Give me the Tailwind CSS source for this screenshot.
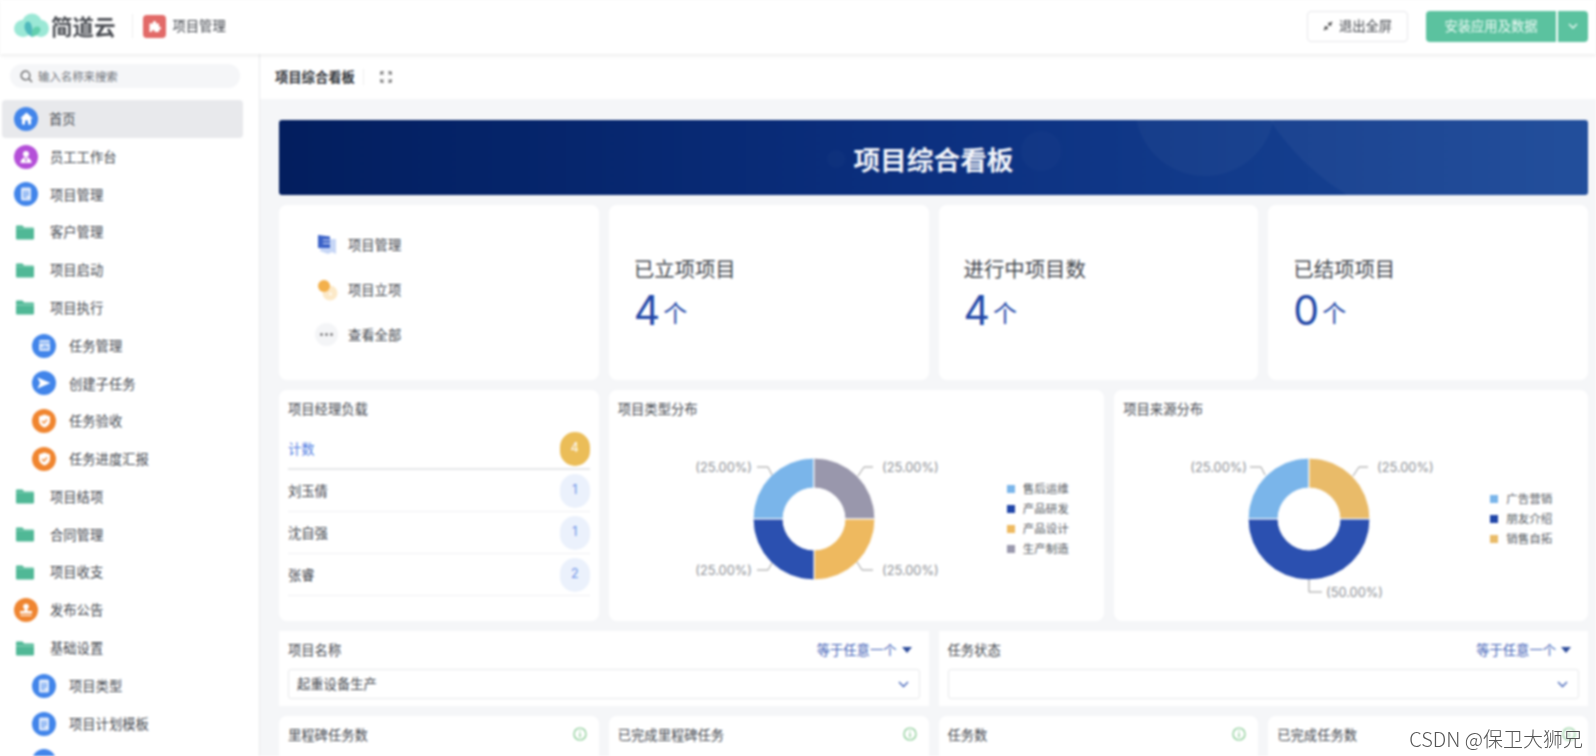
<!DOCTYPE html>
<html lang="zh">
<head>
<meta charset="utf-8">
<title>项目综合看板</title>
<script src="https://cdn.jsdelivr.net/npm/@tailwindcss/browser@4"></script>
</head>
<body class="m-0 bg-white">
<div class="relative w-[1596px] h-[756px] overflow-hidden bg-white">
<div class="flex flex-col w-full h-full blur-[0.8px] font-['Noto_Sans_CJK_SC',sans-serif] text-[13.3px] text-[#44484f]">

  <!-- top bar -->
  <header class="relative z-10 flex items-center h-[54px] shrink-0 bg-white shadow-[0_1px_4px_rgba(0,0,0,0.1)] pl-[14px] pr-[8px] pb-[2px]">
    <svg class="w-[35px] h-[26px]" viewBox="0 0 35 26"><ellipse cx="9" cy="15.500" rx="9" ry="8.500" fill="#9be8d6"/><circle cx="18" cy="10.500" r="10" fill="#9be8d6"/><ellipse cx="27" cy="15.500" rx="8" ry="8.500" fill="#9be8d6"/><path d="M18 24C13 21 9 16 11 11c1.500-3.500 5-3 6 0 1.500 4 2 8 1 13z" fill="#4fb9bd"/><path d="M18 24c-1-4 0-8 3-10 2.500-1.500 6 0 5.500 3C26 20 22 23 18 24z" fill="#63cfae"/></svg>
    <span class="ml-[2px] text-[21.500px] font-bold text-[#4a4d53]">简道云</span>
    <span class="ml-[16px] w-px h-[24px] bg-[#eeeeee]"></span>
    <span class="ml-[10px] flex items-center justify-center w-[23px] h-[23px] rounded-[4px] bg-[#e26a68]">
      <svg class="w-[13px] h-[13px]" viewBox="0 0 13 13"><path d="M1.500 3.500H5C4.500 2.500 5 1 6.500 1S8.500 2.500 8 3.500h3V7c1-.5 2 0 2 1.300S12 10 11 9.500V12H6.500c.5-1-.2-2-1.300-2S3.500 11 4 12H1.500z" fill="#fff"/></svg>
    </span>
    <span class="ml-[7px]">项目管理</span>
    <div class="ml-auto flex items-center justify-center gap-[6px] w-[101px] h-[31px] rounded-[4px] border border-[#e6e7ea] text-[#44474d]">
      <svg class="w-[10px] h-[10px]" viewBox="0 0 10 10"><path d="M1 9l3-3M9 1L6 4" stroke="#444" stroke-width="1.500"/><path d="M1 5.500h3.500V9zM9 4.500H5.500V1z" fill="#333"/></svg>
      退出全屏
    </div>
    <div class="ml-[18px] flex items-center justify-center w-[130px] h-[31px] rounded-l-[4px] bg-[#5bc29f] text-[#f0faf6]">安装应用及数据</div>
    <div class="ml-[2px] flex items-center justify-center w-[30px] h-[31px] rounded-r-[4px] bg-[#5bc29f]">
      <svg class="w-[10px] h-[6px]" viewBox="0 0 10 6" fill="none"><path d="M1 1l4 4 4-4" stroke="#f0faf6" stroke-width="1.300"/></svg>
    </div>
  </header>

  <div class="flex flex-1 min-h-0">
    <!-- sidebar -->
    <aside class="w-[260px] shrink-0 border-r border-[#e8e9eb] bg-white overflow-hidden">
      <div class="mt-[10px] ml-[10px] w-[230px] h-[24px] rounded-full bg-[#f5f6f8] flex items-center pl-[10px] pt-[1px] gap-[5px] text-[11.400px] text-[#6e7279]">
        <svg class="w-[13px] h-[13px]" viewBox="0 0 13 13" fill="none"><circle cx="5.500" cy="5.500" r="4.300" stroke="#555" stroke-width="1.200"/><path d="M8.700 8.700L12 12" stroke="#555" stroke-width="1.200"/></svg>
        输入名称来搜索
      </div>
      <nav class="mt-[12px]">
        <div class="flex items-center ml-[2px] w-[241px] h-[37.800px] rounded-[4px] bg-[#e8e9ec] pl-[12px] gap-[11px]">
          <span class="flex items-center justify-center w-[24px] h-[24px] rounded-full bg-[#4285ea] shrink-0"><svg class="w-[15px] h-[15px]" viewBox="0 0 15 15"><path d="M7.500 1.500L14 7.500h-2v6H9V9.500H6v4H3v-6H1z" fill="#fff"/></svg></span>首页
        </div>
        <div class="flex items-center ml-[2px] h-[37.800px] pl-[12px] gap-[12px]">
          <span class="flex items-center justify-center w-[24px] h-[24px] rounded-full bg-[#b44fd8] shrink-0"><svg class="w-[14px] h-[14px]" viewBox="0 0 14 14"><circle cx="7" cy="4" r="3" fill="#fff"/><path d="M1.500 13c0-3.500 2.500-5.500 5.500-5.500s5.500 2 5.500 5.500z" fill="#fff"/><path d="M7 8l-1 2 1 2 1-2z" fill="#b44fd8"/></svg></span>员工工作台
        </div>
        <div class="flex items-center ml-[2px] h-[37.800px] pl-[12px] gap-[12px]">
          <span class="flex items-center justify-center w-[24px] h-[24px] rounded-full bg-[#4285ea] shrink-0"><svg class="w-[12px] h-[14px]" viewBox="0 0 12 14"><rect x="1" y="0.500" width="10" height="13" rx="1.500" fill="#dce8fb"/><path d="M3 5h6M3 7.500h6M3 10h4" stroke="#4285ea"/></svg></span>项目管理
        </div>
        <div class="flex items-center ml-[2px] h-[37.800px] pl-[14px] gap-[16px]">
          <svg class="w-[18px] h-[15px] shrink-0" viewBox="0 0 18 15"><path d="M0 1.500A1 1 0 0 1 1 .5h5.500l1.500 2h9a1 1 0 0 1 1 1v10a1 1 0 0 1-1 1H1a1 1 0 0 1-1-1z" fill="#50b896"/><path d="M0 3.500h18" stroke="#8dd3bb" stroke-width=".7"/></svg>客户管理
        </div>
        <div class="flex items-center ml-[2px] h-[37.800px] pl-[14px] gap-[16px]">
          <svg class="w-[18px] h-[15px] shrink-0" viewBox="0 0 18 15"><path d="M0 1.500A1 1 0 0 1 1 .5h5.500l1.500 2h9a1 1 0 0 1 1 1v10a1 1 0 0 1-1 1H1a1 1 0 0 1-1-1z" fill="#50b896"/><path d="M0 3.500h18" stroke="#8dd3bb" stroke-width=".7"/></svg>项目启动
        </div>
        <div class="flex items-center ml-[2px] h-[37.800px] pl-[14px] gap-[16px]">
          <svg class="w-[18px] h-[15px] shrink-0" viewBox="0 0 18 15"><path d="M0 1.500A1 1 0 0 1 1 .5h5.500l1.500 2h9a1 1 0 0 1 1 1v10a1 1 0 0 1-1 1H1a1 1 0 0 1-1-1z" fill="#50b896"/><path d="M0 5h18" stroke="#a5e0cb" stroke-width=".8"/></svg>项目执行
        </div>
        <div class="flex items-center ml-[2px] h-[37.800px] pl-[30px] gap-[13px]">
          <span class="flex items-center justify-center w-[24px] h-[24px] rounded-full bg-[#4285ea] shrink-0"><svg class="w-[13px] h-[13px]" viewBox="0 0 13 13"><rect x="1" y="1" width="11" height="11" rx="1.500" fill="#dce8fb"/><path d="M1 3.800h11" stroke="#4285ea"/><path d="M4 10V8M6.500 10V6M9 10V7" stroke="#4285ea" stroke-width="1.200"/></svg></span>任务管理
        </div>
        <div class="flex items-center ml-[2px] h-[37.800px] pl-[30px] gap-[13px]">
          <span class="flex items-center justify-center w-[24px] h-[24px] rounded-full bg-[#4285ea] shrink-0"><svg class="w-[14px] h-[12px]" viewBox="0 0 14 12"><path d="M0.500 0.500L13.500 6 0.500 11.500 3 6z" fill="#fff"/></svg></span>创建子任务
        </div>
        <div class="flex items-center ml-[2px] h-[37.800px] pl-[30px] gap-[13px]">
          <span class="flex items-center justify-center w-[24px] h-[24px] rounded-full bg-[#f0852f] shrink-0"><svg class="w-[13px] h-[14px]" viewBox="0 0 13 14"><path d="M6.500.5l5.500 2v4.500c0 3-2.500 5.500-5.500 6.500C3.500 12.500 1 10 1 7V2.500z" fill="#fff"/><path d="M4 7l2 2 3-3.500" stroke="#f0852f" stroke-width="1.300" fill="none"/></svg></span>任务验收
        </div>
        <div class="flex items-center ml-[2px] h-[37.800px] pl-[30px] gap-[13px]">
          <span class="flex items-center justify-center w-[24px] h-[24px] rounded-full bg-[#f0852f] shrink-0"><svg class="w-[13px] h-[14px]" viewBox="0 0 13 14"><path d="M6.500.5l5.500 2v4.500c0 3-2.500 5.500-5.500 6.500C3.500 12.500 1 10 1 7V2.500z" fill="#fff"/><path d="M4 7l2 2 3-3.500" stroke="#f0852f" stroke-width="1.300" fill="none"/></svg></span>任务进度汇报
        </div>
        <div class="flex items-center ml-[2px] h-[37.800px] pl-[14px] gap-[16px]">
          <svg class="w-[18px] h-[15px] shrink-0" viewBox="0 0 18 15"><path d="M0 1.500A1 1 0 0 1 1 .5h5.500l1.500 2h9a1 1 0 0 1 1 1v10a1 1 0 0 1-1 1H1a1 1 0 0 1-1-1z" fill="#50b896"/><path d="M0 3.500h18" stroke="#8dd3bb" stroke-width=".7"/></svg>项目结项
        </div>
        <div class="flex items-center ml-[2px] h-[37.800px] pl-[14px] gap-[16px]">
          <svg class="w-[18px] h-[15px] shrink-0" viewBox="0 0 18 15"><path d="M0 1.500A1 1 0 0 1 1 .5h5.500l1.500 2h9a1 1 0 0 1 1 1v10a1 1 0 0 1-1 1H1a1 1 0 0 1-1-1z" fill="#50b896"/><path d="M0 3.500h18" stroke="#8dd3bb" stroke-width=".7"/></svg>合同管理
        </div>
        <div class="flex items-center ml-[2px] h-[37.800px] pl-[14px] gap-[16px]">
          <svg class="w-[18px] h-[15px] shrink-0" viewBox="0 0 18 15"><path d="M0 1.500A1 1 0 0 1 1 .5h5.500l1.500 2h9a1 1 0 0 1 1 1v10a1 1 0 0 1-1 1H1a1 1 0 0 1-1-1z" fill="#50b896"/><path d="M0 3.500h18" stroke="#8dd3bb" stroke-width=".7"/></svg>项目收支
        </div>
        <div class="flex items-center ml-[2px] h-[37.800px] pl-[12px] gap-[12px]">
          <span class="flex items-center justify-center w-[24px] h-[24px] rounded-full bg-[#ef8530] shrink-0"><svg class="w-[14px] h-[14px]" viewBox="0 0 14 14"><circle cx="7" cy="3.500" r="2.800" fill="#fff"/><path d="M5.500 5.500h3V8H13v2.500H1V8h4.500z" fill="#fff"/><path d="M1.500 12h11v1h-11z" fill="#fff"/></svg></span>发布公告
        </div>
        <div class="flex items-center ml-[2px] h-[37.800px] pl-[14px] gap-[16px]">
          <svg class="w-[18px] h-[15px] shrink-0" viewBox="0 0 18 15"><path d="M0 1.500A1 1 0 0 1 1 .5h5.500l1.500 2h9a1 1 0 0 1 1 1v10a1 1 0 0 1-1 1H1a1 1 0 0 1-1-1z" fill="#50b896"/><path d="M0 5h18" stroke="#a5e0cb" stroke-width=".8"/></svg>基础设置
        </div>
        <div class="flex items-center ml-[2px] h-[37.800px] pl-[30px] gap-[13px]">
          <span class="flex items-center justify-center w-[24px] h-[24px] rounded-full bg-[#4285ea] shrink-0"><svg class="w-[12px] h-[14px]" viewBox="0 0 12 14"><rect x="1" y="0.500" width="10" height="13" rx="1.500" fill="#dce8fb"/><path d="M3 5h6M3 7.500h6M3 10h4" stroke="#4285ea"/></svg></span>项目类型
        </div>
        <div class="flex items-center ml-[2px] h-[37.800px] pl-[30px] gap-[13px]">
          <span class="flex items-center justify-center w-[24px] h-[24px] rounded-full bg-[#4285ea] shrink-0"><svg class="w-[12px] h-[14px]" viewBox="0 0 12 14"><rect x="1" y="0.500" width="10" height="13" rx="1.500" fill="#dce8fb"/><path d="M3 5h6M3 7.500h6M3 10h4" stroke="#4285ea"/></svg></span>项目计划模板
        </div>
        <div class="flex items-center ml-[2px] h-[37.800px] pl-[30px] gap-[13px]">
          <span class="flex items-center justify-center w-[24px] h-[24px] rounded-full bg-[#4285ea] shrink-0"></span>
        </div>
      </nav>
    </aside>

    <!-- main -->
    <main class="flex-1 min-w-0 flex flex-col bg-[#f5f6f8] overflow-hidden">
      <div class="h-[45px] shrink-0 bg-white flex items-center pl-[15px]">
        <span class="font-bold text-[#2f3238]">项目综合看板</span>
        <span class="ml-[8px] w-px h-[16px] bg-[#eeeeee]"></span>
        <svg class="ml-[16px] w-[12px] h-[12px]" viewBox="0 0 12 12" fill="none" stroke="#444" stroke-width="1.100"><path d="M1 4V1h3M8 1h3v3M11 8v3H8M4 11H1V8"/><path d="M1 1l3 3M11 1L8 4M11 11L8 8M1 11l3-3" stroke-width=".7"/></svg>
      </div>

      <div class="flex-1 min-h-0 pt-[21px] pl-[19px] pr-[8px] flex flex-col gap-[10px]">
        <!-- banner -->
        <div class="relative shrink-0 h-[75px] rounded-[3px] overflow-hidden bg-gradient-to-r from-[#031e5e] via-[#0c3080] to-[#1a4898] flex items-center justify-center">
          <span class="absolute left-[856px] top-[-84px] w-[140px] h-[140px] rounded-full bg-white/3"></span>
          <span class="absolute left-[949px] top-[-391px] w-[504px] h-[504px] rounded-full bg-white/4"></span>
          <span class="absolute left-[742px] top-[11px] w-[40px] h-[40px] rounded-full bg-white/2"></span>
          <span class="absolute left-[548px] top-[30px] w-[18px] h-[18px] rounded-full bg-white/2"></span>
          <span class="relative pt-[3px] text-[26.700px] font-bold text-[#f4f6fa]">项目综合看板</span>
        </div>

        <!-- stats row -->
        <div class="grid grid-cols-4 gap-x-[10px] h-[175px] shrink-0">
          <div class="bg-white rounded-[8px] pl-[37px] pt-[17px] flex flex-col">
            <div class="flex items-center h-[45px] gap-[10px]">
              <svg class="w-[22px] h-[22px]" viewBox="0 0 22 22"><path d="M6 5h14v15l-4-2-4 2-8-3z" fill="#c6d6f6"/><path d="M2 1l12 1.500V14H2z" fill="#3c63c8"/><path d="M7 6h7M7 9.500h7" stroke="#dfe8fb" stroke-width="1.200"/></svg>
              项目管理
            </div>
            <div class="flex items-center h-[45px] gap-[10px]">
              <svg class="w-[22px] h-[22px]" viewBox="0 0 22 22"><circle cx="14" cy="14" r="7.500" fill="#fce9c8"/><circle cx="8" cy="7" r="6" fill="#f3b04b"/><path d="M13 16l1.500-3 1.500 3z" fill="#fff"/></svg>
              项目立项
            </div>
            <div class="flex items-center h-[45px] gap-[10px] -ml-[1px]">
              <span class="flex items-center justify-center w-[23px] h-[23px] rounded-full bg-[#f4f5f7]"><svg class="w-[13px] h-[3px]" viewBox="0 0 13 3"><circle cx="1.500" cy="1.500" r="1.200" fill="#555"/><circle cx="6.500" cy="1.500" r="1.200" fill="#555"/><circle cx="11.500" cy="1.500" r="1.200" fill="#555"/></svg></span>
              查看全部
            </div>
          </div>
          <div class="bg-white rounded-[8px] pl-[25px] pt-[47px]">
            <div class="text-[20.400px] leading-[32px] text-[#44484f]">已立项项目</div>
            <div class="flex items-center gap-[3px] text-[#2449a8]"><span class="text-[41px] leading-[48px] font-['Inter',sans-serif]">4</span><span class="text-[24px] leading-[48px] pt-[4px]">个</span></div>
          </div>
          <div class="bg-white rounded-[8px] pl-[25px] pt-[47px]">
            <div class="text-[20.400px] leading-[32px] text-[#44484f]">进行中项目数</div>
            <div class="flex items-center gap-[3px] text-[#2449a8]"><span class="text-[41px] leading-[48px] font-['Inter',sans-serif]">4</span><span class="text-[24px] leading-[48px] pt-[4px]">个</span></div>
          </div>
          <div class="bg-white rounded-[8px] pl-[25px] pt-[47px]">
            <div class="text-[20.400px] leading-[32px] text-[#44484f]">已结项项目</div>
            <div class="flex items-center gap-[3px] text-[#2449a8]"><span class="text-[41px] leading-[48px] font-['Inter',sans-serif]">0</span><span class="text-[24px] leading-[48px] pt-[4px]">个</span></div>
          </div>
        </div>

        <!-- charts row -->
        <div class="grid grid-cols-[319.750px_495.500px_1fr] gap-x-[10px] h-[231px] shrink-0">
          <div class="bg-white rounded-[8px] px-[9px]">
            <div class="h-[37px] flex items-center">项目经理负载</div>
            <div class="flex items-center justify-between h-[43px] pt-[2px] border-b-[2px] border-[#e6e7e9] text-[#4f7ce2]">
              计数
              <span class="flex items-center justify-center w-[30px] h-[34px] rounded-full bg-[#ebbd58] text-white text-[12.500px] font-['Inter',sans-serif]">4</span>
            </div>
            <div class="flex items-center justify-between h-[42px] border-b border-[#eff0f2]">
              刘玉倩
              <span class="flex items-center justify-center w-[30px] h-[34px] rounded-full bg-[#ebf1fc] text-[#6a90e6] text-[12.500px] font-['Inter',sans-serif]">1</span>
            </div>
            <div class="flex items-center justify-between h-[42px] border-b border-[#eff0f2]">
              沈自强
              <span class="flex items-center justify-center w-[30px] h-[34px] rounded-full bg-[#ebf1fc] text-[#6a90e6] text-[12.500px] font-['Inter',sans-serif]">1</span>
            </div>
            <div class="flex items-center justify-between h-[42px] border-b border-[#eff0f2]">
              张睿
              <span class="flex items-center justify-center w-[30px] h-[34px] rounded-full bg-[#ebf1fc] text-[#6a90e6] text-[12.500px] font-['Inter',sans-serif]">2</span>
            </div>
          </div>

          <div class="bg-white rounded-[8px]">
            <div class="h-[38px] mb-[2px] flex items-center px-[9px]">项目类型分布</div>
            <div class="flex items-center">
              <svg class="w-[398px] h-[178px] shrink-0" viewBox="0 0 398 178">
                <g stroke="#fff" stroke-width="1">
                  <path d="M205 28A61 61 0 0 0 144 89L174 89A31 31 0 0 1 205 58Z" fill="#7ab5ea"/>
                  <path d="M205 28A61 61 0 0 1 266 89L236 89A31 31 0 0 0 205 58Z" fill="#9997ac"/>
                  <path d="M266 89A61 61 0 0 1 205 150L205 120A31 31 0 0 0 236 89Z" fill="#eeb95f"/>
                  <path d="M205 150A61 61 0 0 1 144 89L174 89A31 31 0 0 0 205 120Z" fill="#2b50b0"/>
                </g>
                <g fill="none" stroke="#999" stroke-width="1">
                  <path d="M148 37H159L163 45"/><path d="M264 37H255L249 46"/><path d="M148 140H159L163 133"/><path d="M264 140H253L248 132"/>
                </g>
                <g fill="#8c8f95" font-size="12.800" font-family="Inter, sans-serif">
                  <text x="143" y="41.500" text-anchor="end">(25.00%)</text>
                  <text x="273" y="41.500">(25.00%)</text>
                  <text x="143" y="144.500" text-anchor="end">(25.00%)</text>
                  <text x="273" y="144.500">(25.00%)</text>
                </g>
              </svg>
              <div class="flex flex-col text-[11.500px] text-[#55595f]">
                <div class="flex items-center h-[20px] gap-[8px]"><span class="w-[8px] h-[8px] bg-[#7ab5ea]"></span>售后运维</div>
                <div class="flex items-center h-[20px] gap-[8px]"><span class="w-[8px] h-[8px] bg-[#1f45a8]"></span>产品研发</div>
                <div class="flex items-center h-[20px] gap-[8px]"><span class="w-[8px] h-[8px] bg-[#eeb95f]"></span>产品设计</div>
                <div class="flex items-center h-[20px] gap-[8px]"><span class="w-[8px] h-[8px] bg-[#9997ac]"></span>生产制造</div>
              </div>
            </div>
          </div>

          <div class="bg-white rounded-[8px]">
            <div class="h-[38px] mb-[2px] flex items-center px-[9px]">项目来源分布</div>
            <div class="flex items-center">
              <svg class="w-[376px] h-[178px] shrink-0" viewBox="-1 0 376 178">
                <g stroke="#fff" stroke-width="1">
                  <path d="M194 28A61 61 0 0 0 133 89L163 89A31 31 0 0 1 194 58Z" fill="#7ab5ea"/>
                  <path d="M194 28A61 61 0 0 1 255 89L225 89A31 31 0 0 0 194 58Z" fill="#e9bb69"/>
                  <path d="M255 89A61 61 0 0 1 133 89L163 89A31 31 0 0 0 225 89Z" fill="#2b50b0"/>
                </g>
                <g fill="none" stroke="#999" stroke-width="1">
                  <path d="M135 37H146L150 45"/><path d="M253 37H244L238 46"/><path d="M194 150V162H207"/>
                </g>
                <g fill="#8c8f95" font-size="12.800" font-family="Inter, sans-serif">
                  <text x="132" y="41.500" text-anchor="end">(25.00%)</text>
                  <text x="262" y="41.500">(25.00%)</text>
                  <text x="211" y="166.500">(50.00%)</text>
                </g>
              </svg>
              <div class="flex flex-col text-[11.500px] text-[#55595f]">
                <div class="flex items-center h-[20px] gap-[8px]"><span class="w-[8px] h-[8px] bg-[#7ab5ea]"></span>广告营销</div>
                <div class="flex items-center h-[20px] gap-[8px]"><span class="w-[8px] h-[8px] bg-[#1f45a8]"></span>朋友介绍</div>
                <div class="flex items-center h-[20px] gap-[8px]"><span class="w-[8px] h-[8px] bg-[#e9bb69]"></span>销售自拓</div>
              </div>
            </div>
          </div>
        </div>

        <!-- filter row -->
        <div class="grid grid-cols-2 gap-x-[10px] h-[75px] shrink-0">
          <div class="bg-white px-[9px] pt-[7px]">
            <div class="flex items-center justify-between h-[24px]">
              项目名称
              <span class="flex items-center gap-[5px] pr-[8px] text-[#3f60b6]">等于任意一个<svg class="w-[10px] h-[6px]" viewBox="0 0 10 6"><path d="M0 0h10L5 6z" fill="#2b4a9a"/></svg></span>
            </div>
            <div class="mt-[7px] h-[30px] rounded-[3px] border border-[#e8e9eb] flex items-center justify-between pl-[8px] pr-[10px]">
              起重设备生产
              <svg class="w-[11px] h-[7px]" viewBox="0 0 11 7" fill="none"><path d="M1 1l4.500 4.500L10 1" stroke="#3f60b6" stroke-width="1.300"/></svg>
            </div>
          </div>
          <div class="bg-white px-[9px] pt-[7px]">
            <div class="flex items-center justify-between h-[24px]">
              任务状态
              <span class="flex items-center gap-[5px] pr-[8px] text-[#3f60b6]">等于任意一个<svg class="w-[10px] h-[6px]" viewBox="0 0 10 6"><path d="M0 0h10L5 6z" fill="#2b4a9a"/></svg></span>
            </div>
            <div class="mt-[7px] h-[30px] rounded-[3px] border border-[#e8e9eb] flex items-center justify-end pr-[10px]">
              <svg class="w-[11px] h-[7px]" viewBox="0 0 11 7" fill="none"><path d="M1 1l4.500 4.500L10 1" stroke="#3f60b6" stroke-width="1.300"/></svg>
            </div>
          </div>
        </div>

        <!-- metric row -->
        <div class="grid grid-cols-4 gap-x-[10px] h-[60px] shrink-0">
          <div class="bg-white rounded-t-[8px] flex items-start justify-between pl-[9px] pr-[12px] pt-[9px]">
            里程碑任务数
            <svg class="w-[14px] h-[14px] mt-[2px]" viewBox="0 0 14 14" fill="none"><circle cx="7" cy="7" r="6" stroke="#7fc78c" stroke-width="1.200"/><path d="M7 6v4.500M7 3.500v1.300" stroke="#7fc78c" stroke-width="1.200"/></svg>
          </div>
          <div class="bg-white rounded-t-[8px] flex items-start justify-between pl-[9px] pr-[12px] pt-[9px]">
            已完成里程碑任务
            <svg class="w-[14px] h-[14px] mt-[2px]" viewBox="0 0 14 14" fill="none"><circle cx="7" cy="7" r="6" stroke="#7fc78c" stroke-width="1.200"/><path d="M7 6v4.500M7 3.500v1.300" stroke="#7fc78c" stroke-width="1.200"/></svg>
          </div>
          <div class="bg-white rounded-t-[8px] flex items-start justify-between pl-[9px] pr-[12px] pt-[9px]">
            任务数
            <svg class="w-[14px] h-[14px] mt-[2px]" viewBox="0 0 14 14" fill="none"><circle cx="7" cy="7" r="6" stroke="#7fc78c" stroke-width="1.200"/><path d="M7 6v4.500M7 3.500v1.300" stroke="#7fc78c" stroke-width="1.200"/></svg>
          </div>
          <div class="bg-white rounded-t-[8px] flex items-start justify-between pl-[9px] pr-[12px] pt-[9px]">
            已完成任务数
            <svg class="w-[14px] h-[14px] mt-[2px]" viewBox="0 0 14 14" fill="none"><circle cx="7" cy="7" r="6" stroke="#7fc78c" stroke-width="1.200"/><path d="M7 6v4.500M7 3.500v1.300" stroke="#7fc78c" stroke-width="1.200"/></svg>
          </div>
        </div>
      </div>
    </main>
  </div>
</div>
<!-- watermark over the page -->
<div class="absolute right-[13px] bottom-[5px] text-[20px] leading-[24px] text-[#555555] [text-shadow:0_0_2px_#fff] font-['Noto_Sans_CJK_SC',sans-serif] font-light">CSDN @保卫大狮兄</div>
</div>
</body>
</html>
